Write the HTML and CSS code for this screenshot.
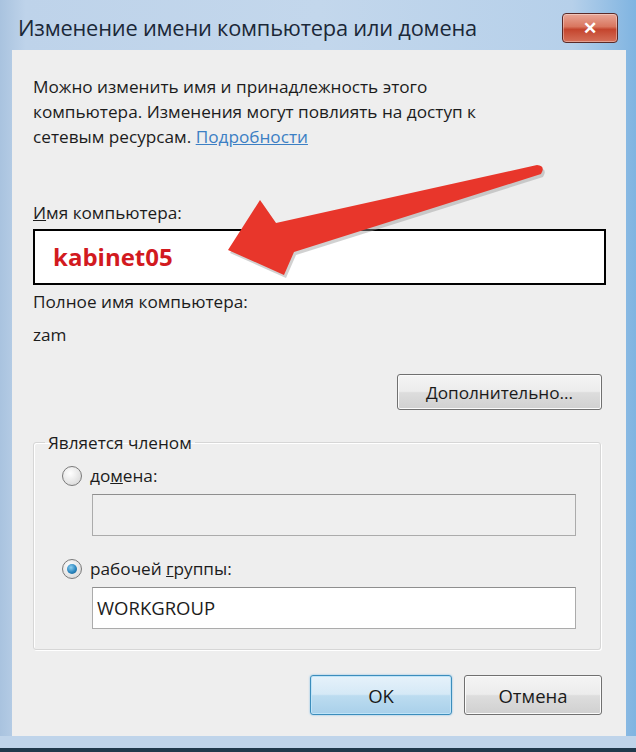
FILE: index.html
```html
<!DOCTYPE html>
<html>
  <head>
    <meta charset="utf-8" />
    <title>Изменение имени компьютера или домена</title>
    <link rel="stylesheet" href="styles.css">
  </head>

  <body>
    <div class="dlg">
      <div class="dlg-titlebar">
        <span class="dlg-title">Изменение имени компьютера или домена</span>
        <span class="dlg-close">&#x2715;</span>
      </div>

      <div class="dlg-client">
        <p class="dlg-intro">
          Можно изменить имя и принадлежность этого<br>
          компьютера. Изменения могут повлиять на доступ к<br>
          сетевым ресурсам. <a class="dlg-link" href="#">Подробности</a>
        </p>

        <label class="dlg-label dlg-label-name"><u>И</u>мя компьютера:</label>
        <div class="dlg-namebox">kabinet05</div>

        <div class="dlg-label dlg-label-full">Полное имя компьютера:</div>
        <div class="dlg-label dlg-value">zam</div>

        <div class="dlg-row-right">
          <button class="dlg-btn dlg-btn-more"><u>Д</u>ополнительно...</button>
        </div>

        <fieldset class="dlg-group">
          <legend class="dlg-legend">Является членом</legend>

          <div class="dlg-radio-row">
            <span class="dlg-radio"></span>
            <span>до<u>м</u>ена:</span>
          </div>
          <div class="dlg-field dlg-field-off"></div>

          <div class="dlg-radio-row dlg-radio-row-2">
            <span class="dlg-radio dlg-radio-on"></span>
            <span>рабочей <u>г</u>руппы:</span>
          </div>
          <div class="dlg-field">WORKGROUP</div>
        </fieldset>

        <div class="dlg-footer">
          <button class="dlg-btn dlg-btn-ok">OK</button>
          <button class="dlg-btn dlg-btn-cancel">Отмена</button>
        </div>
      </div>

      <div class="dlg-bottomline"></div>

      <!-- red arrow drawn over the dialog -->
      <svg class="dlg-arrow" width="636" height="752" viewBox="0 0 636 752">
        <path d="M541 174 L294 252 L284 275 L228 250 L260 200 L276 223 L537 165 Q546 166 541 174 Z"
              fill="#9a9a9a" opacity="0.45" transform="translate(2 3)" />
        <path d="M541 174 L294 252 L284 275 L228 250 L260 200 L276 223 L537 165 Q546 166 541 174 Z"
              fill="#e8362b" />
      </svg>
    </div>
  </body>
</html>
```

FILE: styles.css
```css
body {
  margin: 0;
  background: #bcd2ea;
  font-family: "Open Sans", "Noto Sans", sans-serif;
}

.dlg {
  position: relative;
  width: 636px;
  height: 752px;
  box-sizing: border-box;
  padding: 0 10px 0 12px;
  display: flex;
  flex-direction: column;
  background: linear-gradient(to right, #a9c3df 0, #bed3ea 4%, #c3d7ec 50%, #b6d0ea 90%, #7fb4e1 100%);
  overflow: hidden;
}

.dlg-titlebar {
  height: 50px;
  display: flex;
  align-items: center;
  justify-content: space-between;
  padding: 4px 8px 0 6px;
  box-sizing: border-box;
}

.dlg-title {
  font-size: 21.8px;
  color: #1b2838;
  letter-spacing: -0.2px;
}

.dlg-close {
  width: 54px;
  height: 28px;
  margin-top: 2px;
  border: 1px solid #5a2a28;
  border-radius: 4px;
  background: linear-gradient(to bottom, #e8a798 0, #d9765f 45%, #c4452e 55%, #d5705a 100%);
  color: #ffffff;
  font-size: 17px;
  font-weight: bold;
  text-align: center;
  line-height: 28px;
  box-shadow: inset 0 0 0 1px rgba(255, 255, 255, 0.35);
}

.dlg-client {
  flex: 1;
  background: #eeeeee;
  padding: 24px 20px 0 21px;
  color: #1c1c1c;
  font-size: 17.2px;
  line-height: 25px;
}

.dlg-intro {
  margin: 0;
}

.dlg-link {
  color: #3c7fc4;
  text-decoration: underline;
}

.dlg-label {
  display: block;
  margin: 0;
}

.dlg-label-name {
  margin-top: 51px;
}

.dlg-namebox {
  margin-top: 4px;
  height: 56px;
  box-sizing: border-box;
  border: 2px solid #000000;
  background: #ffffff;
  padding-left: 18px;
  color: #d21a1f;
  font-weight: bold;
  font-size: 24px;
  line-height: 52px;
}

.dlg-label-full {
  margin-top: 4px;
}

.dlg-value {
  margin-top: 8px;
}

.dlg-row-right {
  display: flex;
  justify-content: flex-end;
  margin-top: 27px;
  padding-right: 4px;
}

.dlg-btn {
  font-family: inherit;
  font-size: 17.2px;
  color: #1a1a1a;
  height: 36px;
  border: 1px solid #707070;
  border-radius: 3px;
  background: linear-gradient(to bottom, #f4f4f4 0, #ececec 48%, #dddddd 52%, #d0d0d0 100%);
  box-shadow: inset 0 0 0 1px #fbfbfb;
  padding: 0;
}

.dlg-btn-more {
  width: 205px;
}

.dlg-group {
  margin: 20px 5px 0 0;
  padding: 8px 0 20px 0;
  border: 1px solid #d6d6d6;
  border-radius: 3px;
  box-shadow: 1px 1px 0 #ffffff, inset 1px 1px 0 #ffffff;
}

.dlg-legend {
  padding: 0 3px;
  margin-left: 11px;
}

.dlg-radio-row {
  display: flex;
  align-items: center;
  gap: 8px;
  padding-left: 28px;
}

.dlg-radio-row-2 {
  margin-top: 20px;
}

.dlg-radio {
  width: 20px;
  height: 20px;
  box-sizing: border-box;
  border-radius: 50%;
  border: 1px solid #7a7a7a;
  background: radial-gradient(circle at 40% 35%, #ffffff 0, #e4e4e4 60%, #cfcfcf 100%);
  position: relative;
}

.dlg-radio-on::after {
  content: "";
  position: absolute;
  left: 4px;
  top: 4px;
  width: 10px;
  height: 10px;
  border-radius: 50%;
  background: radial-gradient(circle at 40% 35%, #8fd0f0 0, #2a86c0 55%, #13557f 100%);
}

.dlg-field {
  margin: 6px 24px 0 58px;
  height: 42px;
  box-sizing: border-box;
  border: 1px solid #ababab;
  border-top-color: #8e8e8e;
  background: #ffffff;
  padding-left: 4px;
  font-size: 18.5px;
  line-height: 40px;
}

.dlg-field-off {
  background: #efefef;
}

.dlg-footer {
  display: flex;
  justify-content: flex-end;
  gap: 12px;
  margin-top: 25px;
  padding-right: 4px;
}

.dlg-btn-ok {
  width: 142px;
  height: 40px;
  border-color: #3c8dbc;
  background: linear-gradient(to bottom, #e6f2fa 0, #d5e9f6 48%, #bcdcf0 52%, #a9d0ea 100%);
  box-shadow: inset 0 0 0 1px #bfe4f8, 0 0 2px #6fb6e4;
  font-size: 18.5px;
}

.dlg-btn-cancel {
  width: 138px;
  height: 40px;
  font-size: 18.5px;
}

.dlg-bottomline {
  height: 16px;
  margin: 0 -10px 0 -12px;
  background: linear-gradient(to bottom, #bfd4ea 0, #bfd4ea 75%, #20394c 75%, #20394c 100%);
}

.dlg-arrow {
  position: absolute;
  left: 0;
  top: 0;
  pointer-events: none;
}
```
